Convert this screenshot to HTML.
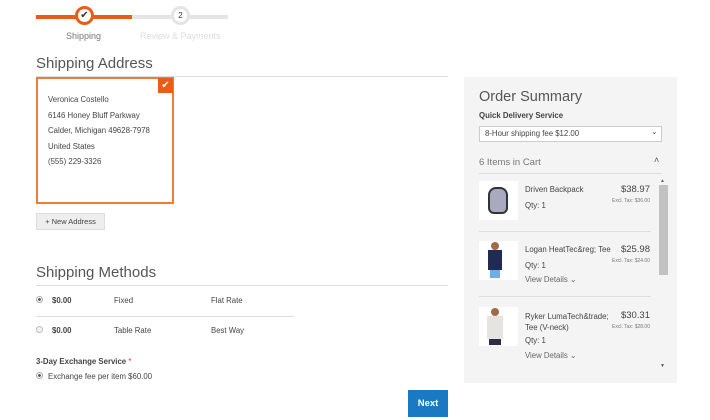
<!DOCTYPE html>
<html><head><meta charset="utf-8"><style>
*{margin:0;padding:0;box-sizing:border-box}
body{width:710px;height:420px;background:#fff;font-family:"Liberation Sans",sans-serif;color:#333;position:relative;overflow:hidden}
.a{position:absolute;white-space:nowrap}
.s{font-size:7.8px;color:#444}
.h{font-size:15px;color:#555}
</style></head><body>
<div class="a" style="left:36px;top:15px;width:96px;height:4px;background:#eb5c16"></div>
<div class="a" style="left:132px;top:15px;width:96px;height:4px;background:#e4e4e4"></div>
<div class="a" style="left:75px;top:6px;width:19px;height:19px;border-radius:50%;border:3px solid #eb5c16;background:#fff;font-size:10px;text-align:center;line-height:13px;color:#333">✔</div>
<div class="a" style="left:171px;top:6px;width:19px;height:19px;border-radius:50%;border:3px solid #e4e4e4;background:#fff;font-size:8px;text-align:center;line-height:13px;color:#333">2</div>
<div class="a" style="left:66px;top:31px;font-size:9px;color:#777">Shipping</div>
<div class="a" style="left:140px;top:31px;font-size:9px;color:#ddd">Review &amp; Payments</div>

<div class="a h" style="left:36px;top:55px">Shipping Address</div>
<div class="a" style="left:36px;top:76px;width:412px;height:1px;background:#ddd"></div>
<div class="a" style="left:36px;top:77px;width:138px;height:127px;border:2px solid #f07c38;background:#fff"></div>
<div class="a" style="left:158px;top:78px;width:15px;height:15px;background:#eb5c16;color:#fff;font-size:10px;text-align:center;line-height:15px">✔</div>
<div class="a s" style="left:48px;top:92px;line-height:15.5px">Veronica Costello<br>6146 Honey Bluff Parkway<br>Calder, Michigan 49628-7978<br>United States<br>(555) 229-3326</div>
<div class="a" style="left:36px;top:213px;width:69px;height:17px;background:#eee;border:1px solid #ddd;font-size:7.5px;color:#444;text-align:center;line-height:15px">+ New Address</div>

<div class="a h" style="left:36px;top:264px">Shipping Methods</div>
<div class="a" style="left:36px;top:285px;width:412px;height:1px;background:#ddd"></div>
<div class="a" style="left:36px;top:296px;width:7px;height:7px;border-radius:50%;border:1px solid #aaa;background:radial-gradient(#555 35%,#fff 45%)"></div>
<div class="a s" style="left:52px;top:296px;font-weight:bold">$0.00</div>
<div class="a s" style="left:114px;top:296px">Fixed</div>
<div class="a s" style="left:211px;top:296px">Flat Rate</div>
<div class="a" style="left:36px;top:316px;width:258px;height:1px;background:#ddd"></div>
<div class="a" style="left:36px;top:326px;width:7px;height:7px;border-radius:50%;border:1px solid #bbb;background:#f4f4f4"></div>
<div class="a s" style="left:52px;top:326px;font-weight:bold">$0.00</div>
<div class="a s" style="left:114px;top:326px">Table Rate</div>
<div class="a s" style="left:211px;top:326px">Best Way</div>
<div class="a s" style="left:36px;top:357px;font-weight:bold">3-Day Exchange Service <span style="color:#e02b27;font-weight:normal">*</span></div>
<div class="a" style="left:36px;top:372px;width:7px;height:7px;border-radius:50%;border:1px solid #aaa;background:radial-gradient(#555 35%,#fff 45%)"></div>
<div class="a s" style="left:48px;top:372px">Exchange fee per item $60.00</div>
<div class="a" style="left:408px;top:390px;width:40px;height:27px;background:#1979c3;color:#fff;font-weight:bold;font-size:9.5px;text-align:center;line-height:27px">Next</div>

<div class="a" style="left:464px;top:77px;width:213px;height:306px;background:#f4f4f4"></div>
<div class="a" style="left:479px;top:89px;font-size:14.5px;color:#555">Order Summary</div>
<div class="a s" style="left:479px;top:111px;font-weight:bold">Quick Delivery Service</div>
<div class="a" style="left:479px;top:126px;width:183px;height:16px;background:#fff;border:1px solid #ccc"></div>
<div class="a s" style="left:485px;top:129px">8-Hour shipping fee $12.00</div>
<div class="a" style="left:651px;top:127px;font-size:8px;color:#555">⌄</div>
<div class="a" style="left:479px;top:157px;font-size:9.5px;color:#777">6 Items in Cart</div>
<div class="a" style="left:654px;top:155px;font-size:9px;color:#555">˄</div>
<div class="a" style="left:479px;top:173px;width:183px;height:1px;background:#ddd"></div>
<div class="a" style="left:659px;top:185px;width:9px;height:90px;background:#c2c2c2"></div>
<div class="a" style="left:660px;top:178px;font-size:5px;color:#666">▲</div>
<div class="a" style="left:660px;top:363px;font-size:5px;color:#555">▼</div>

<div class="a" style="left:479px;top:181px;width:39px;height:39px;background:#fff"></div>
<div class="a" style="left:488px;top:187px;width:20px;height:27px;border-radius:8px 8px 6px 6px;background:#a9a9c0;border:2px solid #333"></div>
<div class="a s" style="left:525px;top:185px">Driven Backpack</div>
<div class="a s" style="left:525px;top:201px">Qty: 1</div>
<div class="a" style="right:60px;top:184px;font-size:9.5px;color:#444">$38.97</div>
<div class="a" style="right:60px;top:198px;font-size:5px;color:#777">Excl. Tax: $36.00</div>
<div class="a" style="left:479px;top:231px;width:172px;height:1px;background:#ddd"></div>

<div class="a" style="left:479px;top:241px;width:39px;height:39px;background:#fff"></div>
<div class="a" style="left:491px;top:242px;width:8px;height:8px;border-radius:50%;background:#a06a4a"></div>
<div class="a" style="left:488px;top:250px;width:14px;height:20px;background:#1f2a55"></div>
<div class="a" style="left:490px;top:270px;width:10px;height:8px;background:#6ab0e8"></div>
<div class="a s" style="left:525px;top:245px">Logan HeatTec&amp;reg; Tee</div>
<div class="a s" style="left:525px;top:261px">Qty: 1</div>
<div class="a s" style="left:525px;top:275px;color:#666">View Details ⌄</div>
<div class="a" style="right:60px;top:244px;font-size:9.5px;color:#444">$25.98</div>
<div class="a" style="right:60px;top:258px;font-size:5px;color:#777">Excl. Tax: $24.00</div>
<div class="a" style="left:479px;top:296px;width:172px;height:1px;background:#ddd"></div>

<div class="a" style="left:479px;top:307px;width:39px;height:39px;background:#fff"></div>
<div class="a" style="left:491px;top:308px;width:8px;height:8px;border-radius:50%;background:#a06a4a"></div>
<div class="a" style="left:487px;top:316px;width:16px;height:23px;background:#e6e4e0"></div>
<div class="a" style="left:489px;top:339px;width:12px;height:6px;background:#2a2f45"></div>
<div class="a s" style="left:525px;top:311px;line-height:11px">Ryker LumaTech&amp;trade;<br>Tee (V-neck)</div>
<div class="a s" style="left:525px;top:336px">Qty: 1</div>
<div class="a s" style="left:525px;top:351px;color:#666">View Details ⌄</div>
<div class="a" style="right:60px;top:310px;font-size:9.5px;color:#444">$30.31</div>
<div class="a" style="right:60px;top:324px;font-size:5px;color:#777">Excl. Tax: $28.00</div>
</body></html>
